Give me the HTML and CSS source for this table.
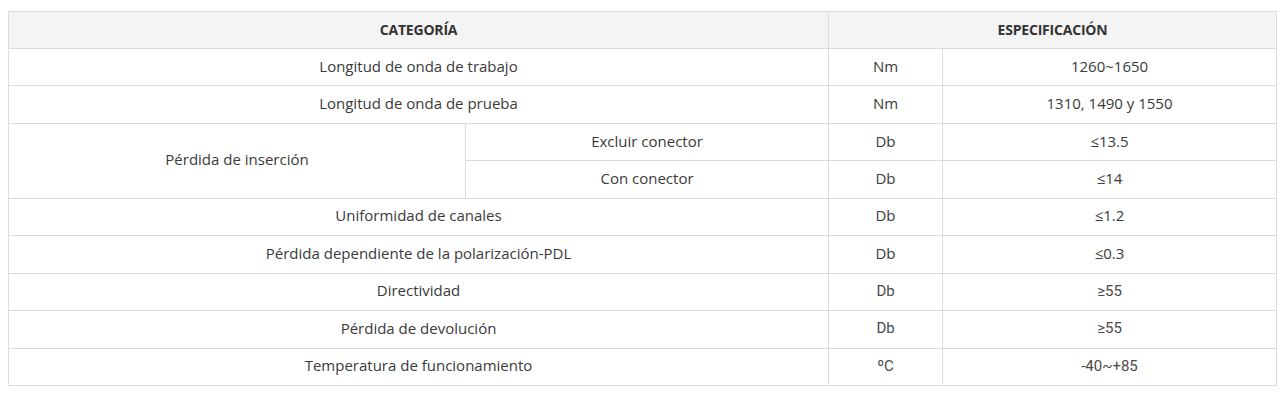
FILE: index.html
```html
<!DOCTYPE html>
<html lang="es">
<head>
<meta charset="utf-8">
<title>Especificación</title>
<link rel="stylesheet" href="styles.css">
</head>
<body>
<div class="wrap">
<table class="spec">
  <colgroup>
    <col class="c1"><col class="c2"><col class="c3"><col class="c4">
  </colgroup>
  <thead>
    <tr><th colspan="2">CATEGORÍA</th><th colspan="2">ESPECIFICACIÓN</th></tr>
  </thead>
  <tbody>
    <tr><td colspan="2">Longitud de onda de trabajo</td><td>Nm</td><td>1260~1650</td></tr>
    <tr><td colspan="2">Longitud de onda de prueba</td><td>Nm</td><td>1310, 1490 y 1550</td></tr>
    <tr><td rowspan="2">Pérdida de inserción</td><td>Excluir conector</td><td>Db</td><td>≤13.5</td></tr>
    <tr><td>Con conector</td><td>Db</td><td>≤14</td></tr>
    <tr><td colspan="2">Uniformidad de canales</td><td>Db</td><td>≤1.2</td></tr>
    <tr><td colspan="2">Pérdida dependiente de la polarización-PDL</td><td>Db</td><td>≤0.3</td></tr>
    <tr><td colspan="2">Directividad</td><td class="alt">Db</td><td class="alt">≥55</td></tr>
    <tr><td colspan="2">Pérdida de devolución</td><td class="alt">Db</td><td class="alt">≥55</td></tr>
    <tr><td colspan="2">Temperatura de funcionamiento</td><td class="alt">ºC</td><td class="alt">-40~+85</td></tr>
  </tbody>
</table>
</div>
</body>
</html>
```
FILE: styles.css
```css
html, body { margin: 0; padding: 0; background: #fff; }
.wrap { padding: 11px 7px 0 8px; }
.spec {
  width: 1268px;
  border-collapse: collapse;
  table-layout: fixed;
  font-family: "Open Sans", "Noto Sans", sans-serif;
  font-size: 15px;
  color: #3a3a3a;
}
.c1 { width: 457px; }
.c2 { width: 363px; }
.c3 { width: 114px; }
.c4 { width: 334px; }
.spec th, .spec td {
  border: 1px solid #dcdcdc;
  text-align: center;
  vertical-align: middle;
  padding: 0 4px 3px;
  box-sizing: border-box;
}
.spec th {
  height: 37px;
  padding-bottom: 2px;
  background: #f4f4f4;
  font-weight: 700;
  font-size: 14px;
  color: #333;
  letter-spacing: -0.2px;
}
.spec td { height: 37.45px; }
.spec td.alt {
  font-family: "Roboto", "Liberation Sans", sans-serif;
  font-size: 15px;
  color: #4a4a4a;
  padding-bottom: 2px;
}
```
